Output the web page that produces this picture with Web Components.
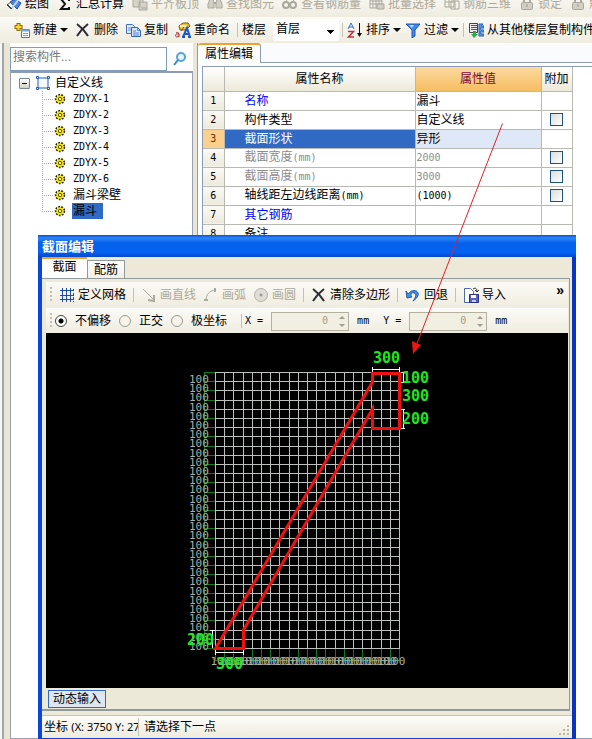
<!DOCTYPE html>
<html lang="zh-CN">
<head>
<meta charset="utf-8">
<title>属性编辑</title>
<style>
html,body{height:100%;margin:0}
body{background:#fff;color:#000;font:12px/16px "Liberation Sans","Noto Sans CJK SC",sans-serif;overflow:hidden;
--mono:"DejaVu Sans Mono","Noto Sans CJK SC",monospace;--face:#ece9d8;--line:#8b9bb8}
</style>
</head>
<body>
<model-app></model-app>
<script>
const ICONS = {
  paint:'<path d="M1 9l4-3 3 3-3 4z" fill="#fff" stroke="#456"/><path d="M4 6l7 7 4-6-6-4z" fill="#4a86dc" stroke="#1f4f9e"/><path d="M6 12l7-9" stroke="#b9d4f5" stroke-width="2"/><path d="M1 8l5 5" stroke="#333"/>',
  sigma:'<path d="M12 5V3H4l4 5-4 5h8v-2" fill="none" stroke="#111" stroke-width="2"/>',
  align:'<path d="M1 3h7v8H1zM7 6h8v8H7zM4 2h7v4" fill="#d6d3c8" stroke="#aaa79c"/><path d="M9 12h5" stroke="#aaa79c"/>',
  find:'<path d="M3 3h3l1 4v5H1V8zM13 3h-3L9 7v5h6V8z" fill="#d2cfc4" stroke="#a9a69b"/><path d="M7 7h2" stroke="#a9a69b" stroke-width="2"/>',
  glasses:'<circle cx="4" cy="9" r="3" fill="none" stroke="#aaa79c" stroke-width="2"/><circle cx="11" cy="9" r="3" fill="none" stroke="#aaa79c" stroke-width="2"/><path d="M4 5l3-3M11 5l3-3" stroke="#aaa79c"/>',
  batch:'<path d="M1 2h12v10H1zM1 5h12M1 8h12M4 2v10M7 2v10M10 2v10" fill="none" stroke="#a9a69b"/><path d="M8 8h7v5H8z" fill="#d2cfc4" stroke="#a9a69b"/>',
  cube:'<path d="M1 2h9v9H1zM5 2v9M1 6h9M7 5h8v8H7zM11 5v8" fill="none" stroke="#a9a69b"/>',
  lock:'<path d="M5 7V4a3 3 0 0 1 6 0v3" fill="none" stroke="#aaa79c" stroke-width="2"/><rect x="2.500" y="6.500" width="11" height="7" rx="1" fill="#d2cfc4" stroke="#a9a69b"/><path d="M8 8v3" stroke="#999"/>',
  create:'<path d="M4.500 1v8M.5 5h8" stroke="#8d6b00" stroke-width="4"/><path d="M4.500 2v6M1.500 5h6" stroke="#ffd62e" stroke-width="2"/><path d="M7.500 7.500h8v8h-8z" fill="#fff" stroke="#4a78c4"/><path d="M7 8.500h9" stroke="#6ea6ee" stroke-width="2"/><path d="M9 11.500h5M9 13.500h5" stroke="#7fa0cf"/>',
  cross:'<path d="M2 2c4 3 8 7 11 12M13 2C9 5 5 9 2 14" fill="none" stroke="#2c2c34" stroke-width="2"/>',
  copy:'<path d="M1.500 2.500h6l2 2v7h-8z" fill="#d8e7fb" stroke="#4a74b8"/><path d="M3 6h4M3 8h4" stroke="#6e95d4"/><path d="M6.500 5.500h6l3 3v6h-9z" fill="#d8e7fb" stroke="#3564b0"/><path d="M12.500 5.500v3h3M8 9h3M8 11h6M8 13h6" fill="none" stroke="#5683cc"/>',
  rename:'<path d="M4 4l4-3h5l2 3-4 4H5z" fill="#edbd42" stroke="#7c5a14"/><path d="M5 4h7" stroke="#fff0a8" stroke-width="2"/><path d="M6 9l3-4" stroke="#765a27"/><path d="M1 11c2-1 3 0 3 1v3M4 12H2c-2 0-2 3 0 3l2-1" fill="none" stroke="#b02a30"/><path d="M8 15l4-9 3 9M10 12h4M7 15h3M13 15h3" fill="none" stroke="#1c57c8" stroke-width="2"/>',
  sort:'<path d="M1 7l3-6 3 6M2 5h4" fill="none" stroke="#356fc8"/><path d="M1 9.500h5.500L1.500 15H7" fill="none" stroke="#b83340" stroke-width="1.500"/><path d="M12.500 1v12" stroke="#111"/><path d="M10 11h5l-2.500 4z" fill="#111"/>',
  filter:'<path d="M1 2h14L10 8v6l-3 2V8z" fill="#3f86ea" stroke="#2058b4"/><path d="M4 3h5L7 6z" fill="#b4d8ff"/>',
  floors:'<path d="M1.500 1.500h8v9h-8z" fill="#eee" stroke="#444"/><path d="M3 3.500h6M3 5.500h6M3 7.500h6" stroke="#555"/><path d="M5 9v3H3l3 4 4-4H8V9z" fill="#2faa47"/><path d="M11 2h4l-2 2h3v2h-4l1 2h3v2h-4l1 2h3v2h-5V4z" fill="#62a0ec" stroke="#2760b8"/>',
  mesh:'<path d="M1 3.500h14M1 8.500h14M1 12.500h14M3.500 1v14M7.500 1v14M11.500 1v14" stroke="#214da0"/><path d="M14.500 2v13" stroke="#214da0" stroke-dasharray="2 2"/>',
  drawline:'<path d="M2 2l10 10" stroke="#aaa99f"/><path d="M7 13l6 1V8" fill="none" stroke="#aaa99f" stroke-width="2"/>',
  arc:'<path d="M3 13C3 8 6 4 12 3" fill="none" stroke="#aaa99f"/><path d="M1 13h4M12 1v4" stroke="#aaa99f" stroke-width="2"/>',
  circle:'<circle cx="8" cy="8" r="6.500" fill="#dfddd4" stroke="#b4b2a8"/><circle cx="8" cy="8" r="1.500" fill="#999"/>',
  undo:'<path d="M3 7c4-5 9-4 10-1s-2 6-5 8c3-4 4-7 1-8S5 8 7 10L2 11 1 4z" fill="#438be5" stroke="#1d5cb0"/>',
  load:'<path d="M1.500 1.500h6l3 3v11h-9z" fill="#fff" stroke="#4b6b9e"/><path d="M10 2c3-2 4 0 4 3M12 3l2 2 2-2" fill="none" stroke="#333"/><path d="M6.500 7.500h9v8h-9z" fill="#5862c8" stroke="#26307c"/><path d="M8 8h5v3H8z" fill="#fff"/><path d="M9 13h4v2H9z" fill="#c8cdf4"/>',
  section:'<path d="M3 3h10v10H3z" fill="#f4f9ff" stroke="#2b5fb8"/><path d="M1.500 1.500h2v2h-2zM12.500 1.500h2v2h-2zM1.500 12.500h2v2h-2zM12.500 12.500h2v2h-2z" fill="#fff" stroke="#1f55b4"/>',
  gear:'<circle cx="8" cy="8" r="5" fill="#f5ea28" stroke="#2c2800" stroke-width="2" stroke-dasharray="2 1.500"/><path d="M8 4v8M4 8h8M5 5l6 6M11 5l-6 6" stroke="#f5ea28" stroke-width="1.500"/><circle cx="8" cy="8" r="2" fill="#fff45a" stroke="#443f00"/>',
  search:'<circle cx="9" cy="6" r="4" fill="#e6f5ff" stroke="#58a0dc" stroke-width="2"/><path d="M6 9l-4 5" stroke="#3b87cc" stroke-width="2"/>'
};
const define = (tag, html, setup) => customElements.define(tag, class extends HTMLElement {
  constructor() {
    super();
    const root = this.attachShadow({mode:'open'});
    const t = document.createElement('template');
    t.innerHTML = html;
    root.append(t.content.cloneNode(true));
  }
  connectedCallback() { if (setup) setup(this.shadowRoot, this); }
});

define('ui-icon', '<style>:host{display:block;flex:none;width:16px;height:16px}svg{display:block;width:100%;height:100%}</style><svg viewBox="0 0 16 16" aria-hidden="true"></svg>',
  (r, h) => { r.querySelector('svg').innerHTML = ICONS[h.getAttribute('name')] || ''; });

define('tool-item', `<style>:host{display:block;flex:none}
button{display:flex;align-items:center;gap:3px;border:0;padding:0;background:none;font:inherit;color:#000;white-space:nowrap}
button:disabled{color:#aca899}
i{display:none;border:solid transparent;border-width:4px 4px 0;border-top-color:#000}
:host([menu]) i{display:block}</style><button type="button"><ui-icon></ui-icon><span><slot></slot></span><i></i></button>`,
  (r, h) => {
    const ic = r.querySelector('ui-icon'); ic.setAttribute('name', h.getAttribute('icon')); ic.connectedCallback();
    r.querySelector('button').disabled = h.hasAttribute('disabled');
  });

define('tool-sep', '<style>:host{display:block;flex:none;width:1px;height:14px;background:#c5c2b2}</style>');
define('tool-grip', '<style>:host{display:block;flex:none;width:2px;height:16px;background:repeating-linear-gradient(#c1beae 0 2px,transparent 2px 4px)}</style>');
define('tool-strip', '<style>:host{display:flex;align-items:center;gap:7px;overflow:hidden;background:linear-gradient(#fbfaf6,#efecdf)}</style><slot></slot>');

define('component-tree', `<style>
:host{display:flex;flex-direction:column;min-width:0;background:#fff}
form{display:flex;height:24px;margin:4px 0 0}
input{box-sizing:border-box;flex:1;min-width:0;border:1px solid #7f9db9;padding:0 2px 4px;font:inherit;background:#fff}
input::placeholder{color:#777;opacity:1}
form button{width:26px;border:0;background:#fdfdfd;padding:0 5px}
.box{flex:1;border:1px solid #9aa0b4;border-top:2px solid #8f9bb2;padding:2px 0 0 8px}
ul{list-style:none;margin:0;padding:0}
.root{display:flex;align-items:center;height:16px}
.root ui-icon{margin:0 4px 0 5px}
.exp{box-sizing:border-box;width:11px;height:11px;border:1px solid #7a8796;border-radius:1px;background:linear-gradient(#fff,#d3d0c4);padding:4px 2px}
.exp::before{content:"";display:block;height:1px;background:#000}
ul ul{padding-left:23px}
ul ul li{display:flex;align-items:center;height:16px}
ul ul li::before{content:"";width:11px;height:16px;background:repeating-linear-gradient(#aaa 0 1px,transparent 1px 2px) 0 0/1px 100% no-repeat,repeating-linear-gradient(90deg,#aaa 0 1px,transparent 1px 2px) 0 8px/100% 1px no-repeat}
ul ul li:last-child::before{background-size:1px 8px,100% 1px}
li ui-icon{width:14px;height:14px}
.root ui-icon{width:16px;height:16px}
li span{margin-left:5px;padding:0 1px}
.m{font:10px/16px var(--mono)}
.sel{background:#316ac5;padding-right:6px}
</style>
<form><input type="search" placeholder="搜索构件..." aria-label="搜索构件"><button type="button" aria-label="搜索"><ui-icon name="search"></ui-icon></button></form>
<div class="box"><ul><li><div class="root"><i class="exp"></i><ui-icon name="section"></ui-icon>自定义线</div><ul></ul></li></ul></div>`,
  r => {
    r.querySelector('ul ul').innerHTML = ['ZDYX-1','ZDYX-2','ZDYX-3','ZDYX-4','ZDYX-5','ZDYX-6','漏斗梁壁','漏斗'].map((t, i) =>
      `<li><ui-icon name="gear"></ui-icon><span class="${i < 6 ? 'm' : i == 7 ? 'sel' : ''}">${t}</span></li>`).join('');
  });

define('property-table', `<style>
:host{display:block;background:#fff;border:1px solid var(--line);border-right:0;padding:0}
table{border-collapse:collapse;table-layout:fixed;width:369px;max-width:100%}
th,td{box-sizing:border-box;height:19px;padding:0;border:1px solid #b9b9b4;font-weight:400;text-align:left;line-height:16px;overflow:hidden;white-space:nowrap}
thead th{height:24px;text-align:center;background:linear-gradient(#fff,#ece9d8);border-top:0}
tr>:first-child{border-left:0}
thead th.val{background:linear-gradient(#fbd9a0,#f6bd62);color:#7a0a3c}
tbody th{text-align:center;background:linear-gradient(#fbfaf5,#ece9dc);font:10px/16px var(--mono)}
td.name{padding-left:20px}
td.v{padding-left:1px}
td.c{text-align:center}
.blue{color:#00f}.gray,.gray+td{color:#8c8c8c}
.on th{background:#fbcf8c;color:#7a2a00}
.on .name{background:#316ac5;color:#fff}
.on .v{background:#dfe8f6}
.m{font:10px/16px var(--mono)}
input{appearance:none;display:block;width:13px;height:13px;box-sizing:border-box;margin:0 auto;border:1px solid #1c5180;background:linear-gradient(135deg,#dcdcd7,#fff)}
</style><table><colgroup><col style="width:21px"><col style="width:191px"><col style="width:126px"><col style="width:31px"></colgroup>
<thead><tr><th></th><th>属性名称</th><th class="val">属性值</th><th>附加</th></tr></thead><tbody></tbody></table>`,
  r => {
    const mm = '<span class="m">(mm)</span>', m = s => `<span class="m">${s}</span>`;
    const rows = [['名称','漏斗',0,'blue'],['构件类型','自定义线',1,''],['截面形状','异形',0,''],['截面宽度'+mm,m('2000'),1,'gray'],['截面高度'+mm,m('3000'),1,'gray'],['轴线距左边线距离'+mm,m('(1000)'),1,''],['其它钢筋','',0,'blue'],['备注','',0,'']];
    r.querySelector('tbody').innerHTML = rows.map((x, i) => `<tr class="${i == 2 ? 'on' : ''}"><th scope="row">${i + 1}</th><td class="name ${x[3]}">${x[0]}</td><td class="v">${x[1]}</td><td class="c">${x[2] ? `<input type="checkbox" aria-label="附加 ${i + 1}">` : ''}</td></tr>`).join('');
  });

define('section-canvas', `<style>:host{display:block;background:#000;min-height:0;overflow:hidden}svg{display:block;width:100%;height:100%}
.dim{font:11px var(--mono);fill:#aab0a4}.big{font:bold 15px var(--mono);fill:#1ee61e}</style>
<svg viewBox="46 333 522 355" role="img" aria-label="截面"></svg>`,
  r => {
    const s = 9.2, x0 = 215.5, y0 = 372.5, X = i => Math.round(i * s) + x0, Y = i => Math.round(i * s) + y0;
    let grid = '', ax = 'M204.500 372V648M215 660.500H400', t = '';
    for (let i = 0; i <= 20; i++) { grid += `M${X(i)} 372V649`; ax += `M${X(i)} 649V661`; }
    for (let i = 0; i <= 30; i++) { grid += `M215 ${Y(i)}H400`; ax += `M204 ${Y(i)}H215`; }
    for (let i = 0; i < 30; i++) t += `<text class="dim" x="189" y="${Y(i) + 10}">100</text>`;
    for (let i = 0; i < 20; i++) t += `<text class="dim" x="${X(i) - 5}" y="665">100</text>`;
    r.querySelector('svg').innerHTML = `<path d="${ax}" stroke="#0a7a18"/><path d="${grid}" stroke="#bcc0bc"/>${t}
<path d="M372 369.500h28M372.500 367v5M399.500 367v5M401 372.500h4M403.500 373v9M401 382.500h4M403.500 409v19M401 409.500h4M401 428.500h4M212.500 630v18M210 630.500h5M216 652.500h27M215.500 650v5M243.500 650v5" fill="none" stroke="#fff"/>
<path d="M372.500 373.500H399.500V428.500H372.500V409L243.500 630V648.500H215.500L372.500 382Z" fill="none" stroke="#f01010" stroke-width="3"/>
<text class="big" x="373" y="363">300</text><text class="big" x="402" y="383">100</text><text class="big" x="402" y="401">300</text><text class="big" x="402" y="424">200</text><text class="big" x="187" y="645">200</text><text class="big" x="216" y="669">300</text>`;
  });

define('number-field', `<style>:host{display:block;flex:none}
div{box-sizing:border-box;display:flex;align-items:center;width:78px;height:19px;border:1px solid #b3b0a0;background:#f1eee2;padding-right:3px}
input{appearance:textfield;flex:1;min-width:0;border:0;padding:0 11px 0 0;background:none;text-align:right;font:10px/16px var(--mono);color:#a19e90}
input::-webkit-inner-spin-button{display:none}
span{display:grid;gap:5px}
i{border:solid transparent;border-width:0 3px 3px;border-bottom-color:#a19e90}i+i{border-width:3px 3px 0;border-top-color:#a19e90}</style>
<div><input type="number" value="0" disabled><span><i></i><i></i></span></div>`,
  (r, h) => r.querySelector('input').setAttribute('aria-label', h.getAttribute('label')));

define('section-dialog', `<style>
:host{display:flex;flex-direction:column;box-sizing:border-box;background:var(--face);border:solid #0a46dc;border-width:0 4px 1px;border-right-color:#0a35c0}
h2{flex:none;margin:0 -4px;padding:2px 4px 0;height:20px;font-size:13px;line-height:20px;color:#fff;background:linear-gradient(#0a4fd0,#2d86f8 3px,#0560ec 8px,#0463f2 17px,#0448cc)}
nav{flex:none;display:flex;align-items:flex-end;height:21px}
nav button{font:inherit;border:1px solid #919b9c;border-bottom:0;margin:0;padding:0 6px;height:18px;line-height:16px;background:linear-gradient(#fff,#f0efe8)}
nav button:first-child{height:21px;width:45px;padding:0 7px 4px;border:0;border-top:2px solid #f0a030;background:#fcfcfa}
.page{flex:1;display:flex;flex-direction:column;min-height:0;border:1px solid #919b9c;border-left:0;border-bottom:2px solid #919b9c;margin-right:2px;padding:3px 1px 0 4px}
tool-strip{flex:none;padding:0 4px}
.tools{height:26px}.opts{height:24px;gap:8px;border-top:1px solid #fff}
.opts tool-grip,.opts tool-sep{margin-right:-5px}
.more{align-self:flex-start;margin-left:auto;border:0;background:none;padding:0;font:bold 14px/16px "Liberation Sans",sans-serif}
fieldset{display:flex;gap:8px;border:0;margin:0 6px 0 0;padding:0}
label{display:flex;align-items:center;gap:8px}
input[type=radio]{appearance:none;box-sizing:border-box;width:12px;height:12px;margin:0;border:1px solid #9b9a90;border-radius:50%;background:#f6f4ea}
input[type=radio]:checked{border-color:#444;background:radial-gradient(#000 0 2px,#fff 3px)}
.m{font:10px/16px var(--mono);white-space:pre}
section-canvas{flex:1}
.foot{flex:none;height:19px;padding:2px 2px 0}
.foot button{box-sizing:border-box;height:18px;padding:0 4px;border:1px solid #316ac5;background:#dfe6f0;font:inherit;line-height:16px}
footer{flex:none;display:flex;align-items:center;height:22px;margin-top:4px;padding:0 2px;border-top:1px solid #c9c6b8;background:linear-gradient(#fdfcf8,#eeebdd);white-space:nowrap}
footer .pos{width:94px;overflow:hidden}
.pos span{font-family:"Noto Sans",sans-serif;font-size:11px}
footer tool-sep{margin-right:5px;height:18px}
footer svg{margin:6px 0 0 auto;width:12px;height:12px}
</style>
<h2>截面编辑</h2>
<nav><button type="button">截面</button><button type="button">配筋</button></nav>
<div class="page">
<tool-strip class="tools"><tool-grip></tool-grip><tool-item icon="mesh">定义网格</tool-item><tool-sep></tool-sep><tool-item icon="drawline" disabled>画直线</tool-item><tool-item icon="arc" disabled>画弧</tool-item><tool-item icon="circle" disabled>画圆</tool-item><tool-sep></tool-sep><tool-item icon="cross">清除多边形</tool-item><tool-sep></tool-sep><tool-item icon="undo">回退</tool-item><tool-sep></tool-sep><tool-item icon="load">导入</tool-item><button class="more" type="button" aria-label="更多">»</button></tool-strip>
<tool-strip class="opts"><tool-grip></tool-grip><fieldset><label><input type="radio" name="o" checked>不偏移</label><label><input type="radio" name="o">正交</label><label><input type="radio" name="o">极坐标</label></fieldset><tool-sep></tool-sep><span class="m">X =</span><number-field label="X"></number-field><span class="m">mm </span><span class="m">Y =</span><number-field label="Y"></number-field><span class="m">mm</span></tool-strip>
<section-canvas></section-canvas>
<div class="foot"><button type="button">动态输入</button></div>
</div>
<footer><div class="pos">坐标 <span>(X: 3750 Y: 27</span></div><tool-sep></tool-sep><div>请选择下一点</div><svg viewBox="0 0 12 12" aria-hidden="true"><path d="M9 1h2v2H9zM5 5h2v2H5zM9 5h2v2H9zM1 9h2v2H1zM5 9h2v2H5zM9 9h2v2H9z" fill="#bdbaa8"/></svg></footer>`);

define('model-app', `<style>
:host{display:flex;flex-direction:column;position:relative;height:100%;overflow:hidden;background:#e9e6d5}
.clip{flex:none;height:17px;overflow:hidden;background:#f0eddf}
.top{height:26px;margin-top:-9px;padding:0 6px;gap:8px}
.second{flex:none;height:26px;padding:0 14px}
.tight{margin-right:-3px}
label{display:flex;flex:none;align-items:center;gap:7px;margin-right:-4px}
select{appearance:none;box-sizing:border-box;width:66px;height:22px;border:0;padding:0 3px 3px;font:inherit;color:#000;background:linear-gradient(#000,#000) 54px 11px/7px 1px no-repeat,linear-gradient(#000,#000) 55px 12px/5px 1px no-repeat,linear-gradient(#000,#000) 56px 13px/3px 1px no-repeat,linear-gradient(#000,#000) 57px 14px/1px 1px no-repeat,#fff}
main{flex:1;display:flex;min-height:0}
aside{flex:none;box-sizing:border-box;width:4px;margin-right:6px;border-right:2px solid #a3a5a5;background:#f4f6f8}
component-tree{flex:0 0 183px}
.props{flex:1;min-width:0;display:flex;flex-direction:column;margin-left:4px;background:#fff;border-left:1px solid #8f9bb2}
.tabs{flex:none;display:flex;height:20px;background:#fafbfd}
.tabs button{box-sizing:border-box;width:63px;border:0;border-top:2px solid #f0a030;border-right:1px solid var(--line);border-radius:3px 3px 0 0;background:#fdfdfb;padding:0 7px;font:inherit;white-space:nowrap}
.tabs::after{content:"";flex:1;border-bottom:1px solid var(--line)}
property-table{margin:3px 0 0 4px;flex:1;min-height:0}
section-dialog{position:absolute;left:38px;right:16px;top:235px;bottom:0}
.arrow{position:absolute;left:0;top:0;width:592px;height:739px;pointer-events:none}
</style>
<div class="clip"><tool-strip class="top"><tool-item icon="paint">绘图</tool-item><tool-item icon="sigma">汇总计算</tool-item><tool-item icon="align" disabled>平齐板顶</tool-item><tool-item icon="find" disabled>查找图元</tool-item><tool-item icon="glasses" disabled>查看钢筋量</tool-item><tool-item icon="batch" disabled>批量选择</tool-item><tool-item icon="cube" disabled>钢筋三维</tool-item><tool-item icon="lock" disabled>锁定</tool-item><tool-item icon="lock" disabled>解锁</tool-item></tool-strip></div>
<tool-strip class="second"><tool-item icon="create" menu>新建</tool-item><tool-item icon="cross">删除</tool-item><tool-item icon="copy">复制</tool-item><tool-item icon="rename">重命名</tool-item><tool-sep class="tight"></tool-sep><label>楼层<select><option>首层</option></select></label><tool-sep class="tight"></tool-sep><tool-item icon="sort" class="tight" menu>排序</tool-item><tool-item icon="filter" class="tight" menu>过滤</tool-item><tool-sep class="tight"></tool-sep><tool-item icon="floors">从其他楼层复制构件</tool-item></tool-strip>
<main><aside></aside><component-tree></component-tree><div class="props"><div class="tabs"><button type="button">属性编辑</button></div><property-table></property-table></div></main>
<section-dialog></section-dialog>
<svg class="arrow" viewBox="0 0 592 739" aria-hidden="true"><path d="M502.500 123.500L416 346" stroke="#e0202c" fill="none"/><path d="M413 354l-1-13 9 4z" fill="#f01414"/></svg>`);
</script>
</body>
</html>
